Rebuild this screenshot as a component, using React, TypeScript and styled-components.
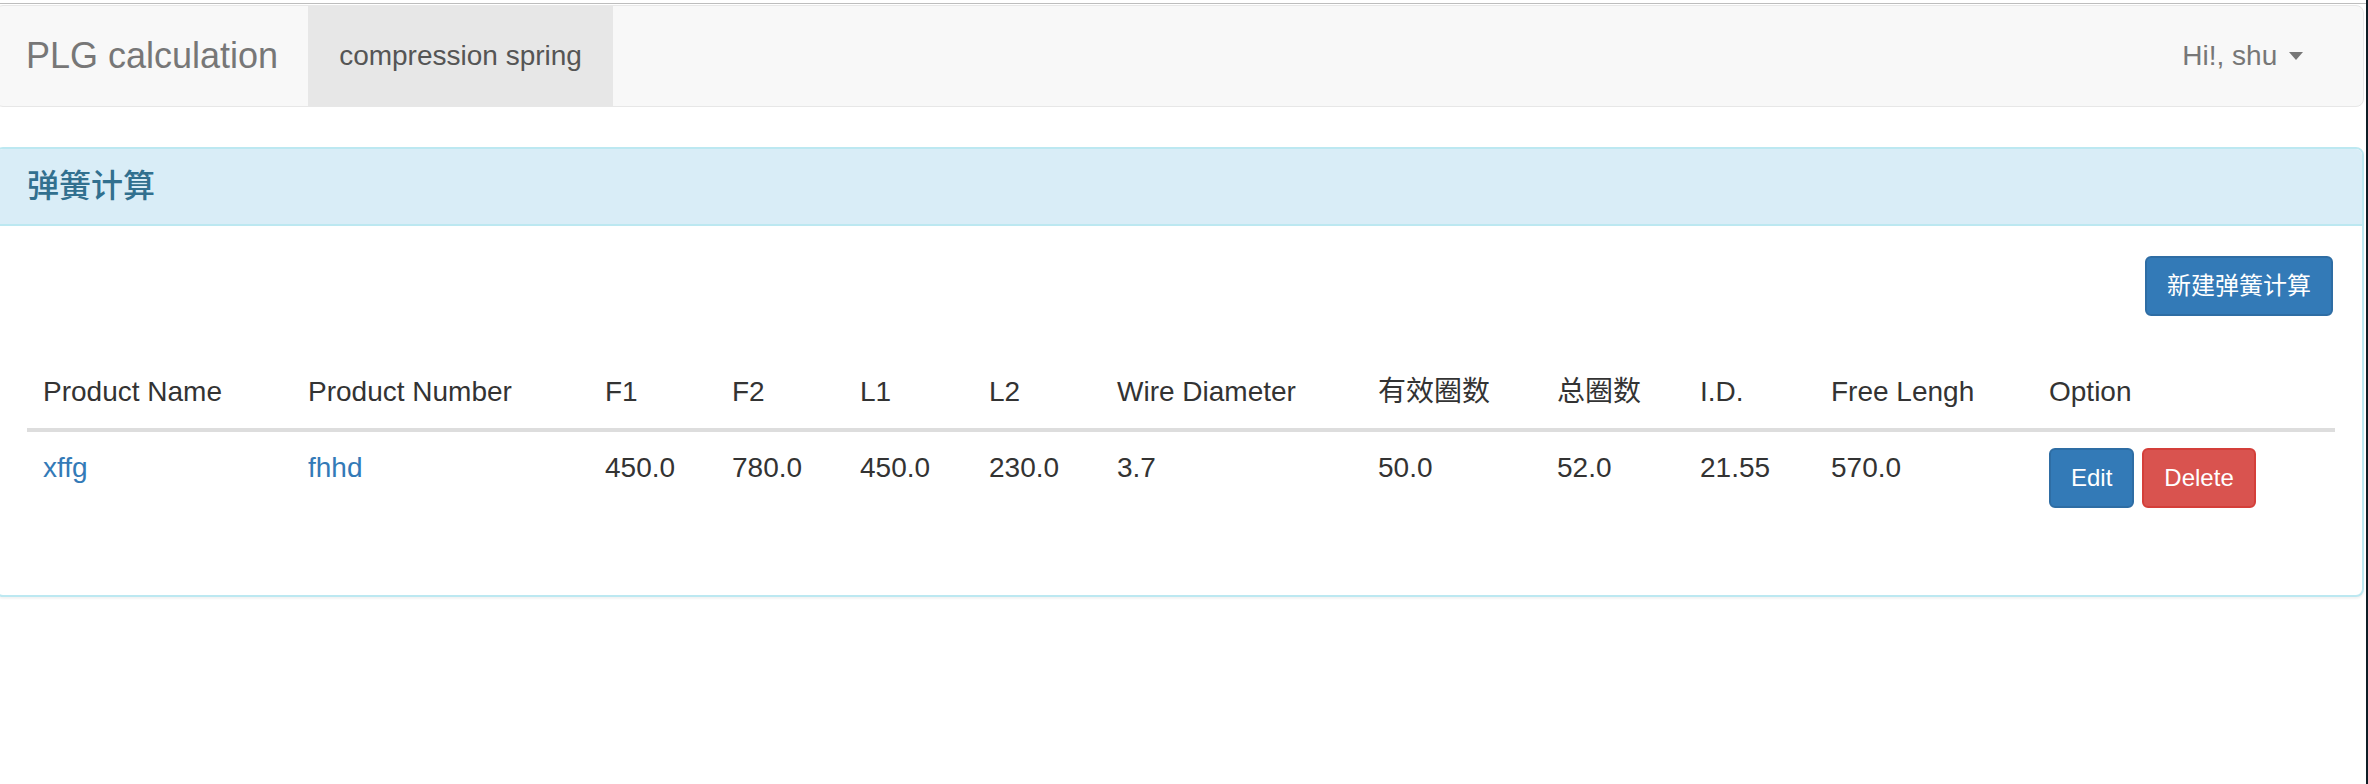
import React from "react";
import styled, { createGlobalStyle } from "styled-components";

const GlobalStyle = createGlobalStyle`
  html, body {
    margin: 0;
    padding: 0;
    background: #fff;
  }
  body {
    font-family: "Liberation Sans", Arial, "Noto Sans CJK SC", sans-serif;
    color: #333;
  }
`;

type Row = {
  name: string;
  number: string;
  f1: string;
  f2: string;
  l1: string;
  l2: string;
  wire: string;
  active: string;
  total: string;
  id: string;
  free: string;
};

const rows: Row[] = [
  {
    name: "xffg",
    number: "fhhd",
    f1: "450.0",
    f2: "780.0",
    l1: "450.0",
    l2: "230.0",
    wire: "3.7",
    active: "50.0",
    total: "52.0",
    id: "21.55",
    free: "570.0",
  },
];

const columns = [
  { title: "Product Name", width: 265 },
  { title: "Product Number", width: 297 },
  { title: "F1", width: 127 },
  { title: "F2", width: 128 },
  { title: "L1", width: 129 },
  { title: "L2", width: 128 },
  { title: "Wire Diameter", width: 261 },
  { title: "有效圈数", width: 179 },
  { title: "总圈数", width: 143 },
  { title: "I.D.", width: 131 },
  { title: "Free Lengh", width: 218 },
  { title: "Option", width: 302 },
];

const App = () => {
  return (
    <>
      <GlobalStyle />
      <Screen>
        <Viewport>
          <TopLine />
          <Page>
            <Navbar>
              <Brand>PLG calculation</Brand>
              <NavItem $active>compression spring</NavItem>
              <NavRight>
                <NavItem>
                  Hi!, shu <Caret />
                </NavItem>
              </NavRight>
            </Navbar>

            <Panel>
              <PanelHeading>
                <PanelTitle>弹簧计算</PanelTitle>
              </PanelHeading>
              <PanelBody>
                <Toolbar>
                  <Button $variant="primary">新建弹簧计算</Button>
                </Toolbar>
                <Table>
                  <colgroup>
                    {columns.map((c) => (
                      <Col key={c.title} $w={c.width} />
                    ))}
                  </colgroup>
                  <thead>
                    <tr>
                      {columns.map((c) => (
                        <Th key={c.title}>{c.title}</Th>
                      ))}
                    </tr>
                  </thead>
                  <tbody>
                    {rows.map((r) => (
                      <tr key={r.name}>
                        <Td>
                          <Link href="#">{r.name}</Link>
                        </Td>
                        <Td>
                          <Link href="#">{r.number}</Link>
                        </Td>
                        <Td>{r.f1}</Td>
                        <Td>{r.f2}</Td>
                        <Td>{r.l1}</Td>
                        <Td>{r.l2}</Td>
                        <Td>{r.wire}</Td>
                        <Td>{r.active}</Td>
                        <Td>{r.total}</Td>
                        <Td>{r.id}</Td>
                        <Td>{r.free}</Td>
                        <Td>
                          <Actions>
                            <Button $variant="primary">Edit</Button>
                            <Button $variant="danger">Delete</Button>
                          </Actions>
                        </Td>
                      </tr>
                    ))}
                  </tbody>
                </Table>
              </PanelBody>
            </Panel>
          </Page>
        </Viewport>
        <WindowEdge />
      </Screen>
    </>
  );
};
export default App;

const Screen = styled.div`
  display: flex;
  min-height: 784px;
`;
const Viewport = styled.div`
  flex: 1;
  overflow: hidden;
  padding-top: 3px;
`;
const WindowEdge = styled.div`
  width: 2px;
  background: #0f1d26;
`;
const TopLine = styled.div`
  height: 1px;
  background: #bdbdbd;
  margin-bottom: 1px;
`;
const Page = styled.div`
  margin-left: -5px;
  width: 2369px;
`;
const Navbar = styled.nav`
  display: flex;
  align-items: stretch;
  height: 102px;
  box-sizing: border-box;
  background: #f8f8f8;
  border: 1px solid #e7e7e7;
  border-radius: 8px;
  margin-bottom: 40px;
`;
const Brand = styled.a`
  padding: 0 30px;
  font-size: 36px;
  line-height: 100px;
  color: #777;
`;
const NavItem = styled.a<{ $active?: boolean }>`
  display: flex;
  align-items: center;
  padding: 0 31px;
  font-size: 28px;
  line-height: 40px;
  color: ${(p) => (p.$active ? "#555" : "#777")};
  background: ${(p) => (p.$active ? "#e7e7e7" : "transparent")};
  white-space: pre;
`;
const NavRight = styled.div`
  display: flex;
  margin-left: auto;
  margin-right: 29px;
`;
const Caret = styled.span`
  display: inline-block;
  width: 0;
  height: 0;
  margin-left: 4px;
  border-top: 8px solid #777;
  border-left: 7px solid transparent;
  border-right: 7px solid transparent;
`;
const Panel = styled.section`
  border: 2px solid #bce8f1;
  border-radius: 8px;
  background: #fff;
  box-shadow: 0 2px 2px rgba(0, 0, 0, 0.05);
`;
const PanelHeading = styled.div`
  padding: 20px 30px;
  background: #d9edf7;
  border-bottom: 2px solid #bce8f1;
  border-radius: 6px 6px 0 0;
  color: #31708f;
`;
const PanelTitle = styled.h3`
  margin: 0;
  font-size: 32px;
  font-weight: 500;
  line-height: 1.1;
`;
const PanelBody = styled.div`
  padding: 30px 29px 31px 30px;
`;
const Toolbar = styled.div`
  display: flex;
  justify-content: flex-end;
  margin-bottom: 40px;
`;
const Button = styled.button<{ $variant: "primary" | "danger" }>`
  font-family: inherit;
  font-size: 24px;
  line-height: 1.5;
  padding: 10px 20px;
  border-radius: 6px;
  border: 2px solid ${(p) => (p.$variant === "primary" ? "#2e6da4" : "#d43f3a")};
  background: ${(p) => (p.$variant === "primary" ? "#337ab7" : "#d9534f")};
  color: #fff;
  cursor: pointer;
`;
const Table = styled.table`
  width: 100%;
  border-collapse: collapse;
  table-layout: fixed;
  font-size: 28px;
  line-height: 40px;
  margin-bottom: 40px;
`;
const Col = styled.col<{ $w: number }>`
  width: ${(p) => p.$w}px;
`;
const Th = styled.th`
  text-align: left;
  font-weight: normal;
  padding: 16px;
  border-bottom: 4px solid #ddd;
  white-space: nowrap;
`;
const Td = styled.td`
  padding: 16px;
  vertical-align: top;
  white-space: nowrap;
`;
const Link = styled.a`
  color: #337ab7;
  text-decoration: none;
`;
const Actions = styled.div`
  display: flex;
  gap: 8px;
`;
